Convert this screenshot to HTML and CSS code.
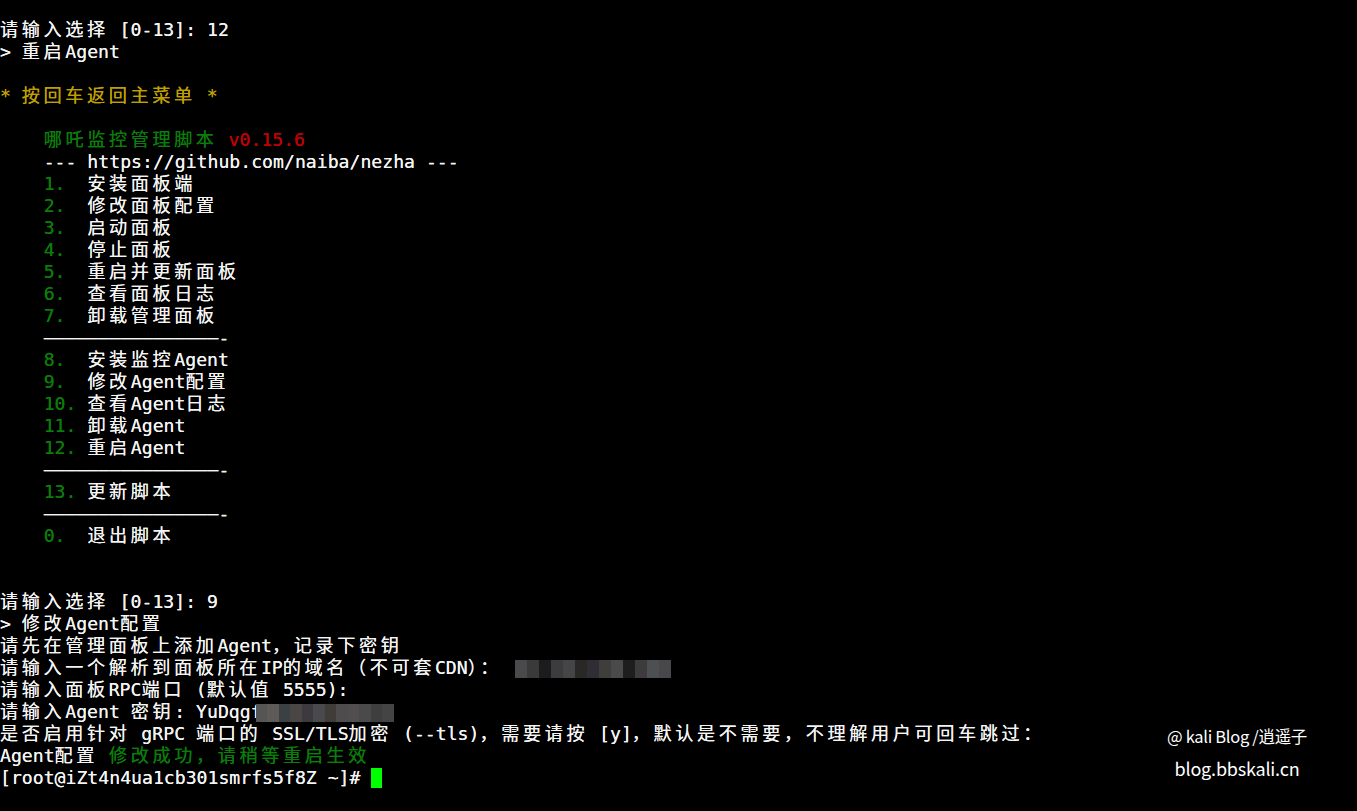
FILE: index.html
```html
<!DOCTYPE html>
<html lang="zh-CN">
<head>
  <meta charset="UTF-8">
  <title>nezha.sh</title>
  <link rel="stylesheet" href="styles.css">
</head>
<body>
  <div id="terminal">
    <div class="line"><span class="w">请输入选择</span> [0-13]: 12</div>
    <div class="line">&gt; <span class="w">重启</span>Agent</div>
    <div class="line"></div>
    <div class="line yellow">* <span class="w">按回车返回主菜单</span> *</div>
    <div class="line"></div>
    <div class="line">    <span class="green w">哪吒监控管理脚本</span> <span class="red">v0.15.6</span></div>
    <div class="line">    --- https://github.com/naiba/nezha ---</div>
    <div class="line">    <span class="green">1.  </span><span class="w">安装面板端</span></div>
    <div class="line">    <span class="green">2.  </span><span class="w">修改面板配置</span></div>
    <div class="line">    <span class="green">3.  </span><span class="w">启动面板</span></div>
    <div class="line">    <span class="green">4.  </span><span class="w">停止面板</span></div>
    <div class="line">    <span class="green">5.  </span><span class="w">重启并更新面板</span></div>
    <div class="line">    <span class="green">6.  </span><span class="w">查看面板日志</span></div>
    <div class="line">    <span class="green">7.  </span><span class="w">卸载管理面板</span></div>
    <div class="line">    ————————————————-</div>
    <div class="line">    <span class="green">8.  </span><span class="w">安装监控</span>Agent</div>
    <div class="line">    <span class="green">9.  </span><span class="w">修改</span>Agent<span class="w">配置</span></div>
    <div class="line">    <span class="green">10. </span><span class="w">查看</span>Agent<span class="w">日志</span></div>
    <div class="line">    <span class="green">11. </span><span class="w">卸载</span>Agent</div>
    <div class="line">    <span class="green">12. </span><span class="w">重启</span>Agent</div>
    <div class="line">    ————————————————-</div>
    <div class="line">    <span class="green">13. </span><span class="w">更新脚本</span></div>
    <div class="line">    ————————————————-</div>
    <div class="line">    <span class="green">0.  </span><span class="w">退出脚本</span></div>
    <div class="line"></div>
    <div class="line"></div>
    <div class="line"><span class="w">请输入选择</span> [0-13]: 9</div>
    <div class="line">&gt; <span class="w">修改</span>Agent<span class="w">配置</span></div>
    <div class="line"><span class="w">请先在管理面板上添加</span>Agent<span class="w">，记录下密钥</span></div>
    <div class="line"><span class="w">请输入一个解析到面板所在</span>IP<span class="w">的域名（不可套</span>CDN<span class="w">）：</span> <span class="mosaic ip"><i style="background:#4a4a4c"></i><i style="background:#3a3a3a"></i><i style="background:#1c1c1e"></i><i style="background:#3c3c3e"></i><i style="background:#454548"></i><i style="background:#2a2826"></i><i style="background:#2e2e34"></i><i style="background:#403e3c"></i><i style="background:#4a4a4a"></i><i style="background:#1e1e1e"></i><i style="background:#3d3b3c"></i><i style="background:#4c5052"></i><i style="background:#48484a"></i></span></div>
    <div class="line"><span class="w">请输入面板</span>RPC<span class="w">端口</span> (<span class="w">默认值</span> 5555):</div>
    <div class="line"><span class="w">请输入</span>Agent <span class="w">密钥</span>: YuDqgf<span class="mosaic key"><i style="background:#555"></i><i style="background:#5e5a58"></i><i style="background:#3a4044"></i><i style="background:#4a4644"></i><i style="background:#3c3a3c"></i><i style="background:#4a4a4e"></i><i style="background:#403c38"></i><i style="background:#4e4c4c"></i><i style="background:#504e4e"></i><i style="background:#4a4a4a"></i><i style="background:#3e3e3e"></i><i style="background:#444"></i></span></div>
    <div class="line"><span class="w">是否启用针对</span> gRPC <span class="w">端口的</span> SSL/TLS<span class="w">加密</span> (--tls)<span class="w">，需要请按</span> [y]<span class="w">，默认是不需要，不理解用户可回车跳过：</span></div>
    <div class="line">Agent<span class="w">配置</span> <span class="green w">修改成功，请稍等重启生效</span></div>
    <div class="line">[root@iZt4n4ua1cb301smrfs5f8Z ~]# <span class="cursor"></span></div>
  </div>

  <div id="watermark">
    <div class="wm-title">@ kali Blog /逍遥子</div>
    <div class="wm-site">blog.bbskali.cn</div>
  </div>
</body>
</html>
```

FILE: styles.css
```css
html, body {
  margin: 0;
  height: 100%;
  background: #000;
  overflow: hidden;
}
#terminal {
  padding-top: 19px;
  font-family: "DejaVu Sans Mono", "Noto Sans CJK SC", monospace;
  font-size: 18.15px;
  color: #f4f4f4;
  text-shadow: 0 0 0.4px currentColor;
}
.line {
  height: 22px;
  line-height: 22px;
  white-space: pre;
}
/* CJK glyphs take two terminal cells */
.w {
  letter-spacing: 3.6px;
}
.green {
  color: #0a7d0a;
}
.red {
  color: #c30000;
}
.yellow {
  color: #c0a000;
}
.mosaic {
  display: inline-flex;
  vertical-align: middle;
  height: 18px;
}
.mosaic i {
  display: block;
  width: 12px;
  height: 18px;
}
.mosaic.ip {
  margin-left: 2px;
}
.mosaic.key {
  margin-left: -6px;
}
.mosaic.key i {
  width: 11.5px;
}
.cursor {
  display: inline-block;
  width: 11px;
  height: 20px;
  background: #00ff00;
  vertical-align: -4px;
}
#watermark {
  position: absolute;
  left: 1137px;
  top: 723px;
  width: 200px;
  text-align: center;
  font-family: "Noto Sans CJK SC", "Noto Sans", sans-serif;
  color: #fff;
}
.wm-title {
  font-size: 16.5px;
  line-height: 26px;
  letter-spacing: -0.3px;
}
.wm-site {
  margin-top: 6px;
  font-size: 18px;
  line-height: 26px;
  letter-spacing: -0.2px;
}
```
